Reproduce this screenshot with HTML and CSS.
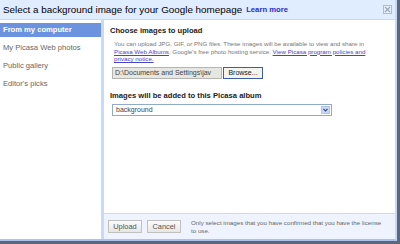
FILE: index.html
```html
<!DOCTYPE html>
<html lang="en">
<head>
    <meta charset="UTF-8">
    <title>Select a background image</title>
    <link rel="stylesheet" href="styles.css">
</head>
<body>
    <div class="dialog">
        <div class="header">
            <span class="title">Select a background image for your Google homepage</span>
            <a class="learn" href="#">Learn more</a>
            <span class="close">
                <svg width="7" height="7" viewBox="0 0 7 7"><path d="M1 1L6 6M6 1L1 6" stroke="#9aa6ba" stroke-width="1.2"/></svg>
            </span>
        </div>
        <div class="body">
            <div class="sidebar">
                <div class="item selected">From my computer</div>
                <div class="item">My Picasa Web photos</div>
                <div class="item">Public gallery</div>
                <div class="item">Editor's picks</div>
            </div>
            <div class="main">
                <div class="content">
                    <div class="heading">Choose images to upload</div>
                    <div class="desc">
                        You can upload JPG, GIF, or PNG files. These images will be available to view and share in<br>
                        <a href="#">Picasa Web Albums</a>, Google's free photo hosting service. <a href="#">View Picasa program policies and</a><br>
                        <a href="#">privacy notice.</a>
                    </div>
                    <div class="file-row">
                        <div class="file-box">D:\Documents and Settings\jav</div>
                        <div class="browse">Browse...</div>
                    </div>
                    <div class="heading album">Images will be added to this Picasa album</div>
                    <div class="select">
                        <span class="select-text">background</span>
                        <span class="select-arrow">
                            <svg width="5" height="4" viewBox="0 0 5 4"><path d="M0.5 1L2.5 3L4.5 1" fill="none" stroke="#3a4a70" stroke-width="1.1"/></svg>
                        </span>
                    </div>
                </div>
                <div class="footer">
                    <div class="btn">Upload</div>
                    <div class="btn">Cancel</div>
                    <div class="note">Only select images that you have confirmed that you have the license<br>to use.</div>
                </div>
            </div>
        </div>
    </div>
</body>
</html>
```

FILE: styles.css
```css
body {
    margin: 0;
    background: #5f6676;
    font-family: "Liberation Sans", Arial, sans-serif;
}
.dialog {
    width: 397px;
    height: 241px;
    box-sizing: border-box;
    background: #fff;
    border-right: 2px solid #c3d9ff;
    border-bottom: 2px solid #a9c3ef;
    display: flex;
    flex-direction: column;
}
.header {
    height: 19px;
    flex: none;
    background: #e0ecff;
    border-bottom: 1px solid #c3d9ff;
    display: flex;
    align-items: center;
    padding-left: 3px;
}
.title {
    font-size: 9.85px;
    color: #000;
}
.learn {
    font-size: 7.7px;
    font-weight: bold;
    color: #2b2bcc;
    text-decoration: none;
    margin-left: 4px;
}
.close {
    margin-left: auto;
    margin-right: 3px;
    width: 9px;
    height: 9px;
    box-sizing: border-box;
    border: 1px solid #a9bcd9;
    background: #e8f0fd;
    display: flex;
    align-items: center;
    justify-content: center;
}
.body {
    flex: 1;
    display: flex;
}
.sidebar {
    width: 101px;
    padding-top: 3px;
}
.item {
    height: 14px;
    line-height: 14px;
    margin-bottom: 4px;
    padding-left: 3px;
    font-size: 7.6px;
    color: #666;
}
.item.selected {
    background: #6b93e0;
    color: #fff;
    font-weight: bold;
}
.main {
    flex: 1;
    display: flex;
    flex-direction: column;
    border-left: 3px solid #c6dafd;
}
.content {
    flex: 1;
    padding: 6px 6px 0 6px;
}
.heading {
    font-size: 7.6px;
    font-weight: bold;
    color: #222;
    line-height: 10px;
}
.desc {
    margin-top: 4px;
    padding-left: 4px;
    font-size: 6.2px;
    line-height: 7.5px;
    color: #777;
}
.desc a {
    color: #4444cc;
}
.file-row {
    display: flex;
    margin-top: 4px;
    margin-left: 2px;
    height: 12px;
}
.file-box {
    width: 110px;
    box-sizing: border-box;
    background: #e6e6e2;
    border: 1px solid #b4b4b0;
    font-size: 7px;
    line-height: 10px;
    color: #444;
    padding-left: 2px;
    white-space: nowrap;
    overflow: hidden;
}
.browse {
    width: 40px;
    box-sizing: border-box;
    margin-left: 1px;
    border: 1px solid #3c5ea8;
    background: #f3f3ef;
    font-size: 7px;
    line-height: 10px;
    color: #222;
    text-align: center;
}
.album {
    margin-top: 12px;
}
.select {
    margin-top: 3px;
    margin-left: 2px;
    width: 220px;
    height: 12px;
    box-sizing: border-box;
    border: 1px solid #8fa9cf;
    display: flex;
    align-items: center;
}
.select-text {
    flex: 1;
    font-size: 7px;
    color: #444;
    padding-left: 3px;
}
.select-arrow {
    width: 9px;
    height: 8px;
    margin-right: 1px;
    background: #c9d8f8;
    border: 1px solid #b0c4ec;
    box-sizing: border-box;
    display: flex;
    align-items: center;
    justify-content: center;
}
.footer {
    height: 25px;
    flex: none;
    background: #eef3fd;
    border-top: 1px solid #c9dbfa;
    display: flex;
    align-items: center;
    padding-left: 4px;
}
.btn {
    width: 34px;
    height: 13px;
    box-sizing: border-box;
    margin-right: 5px;
    border: 1px solid #c0c0c0;
    background: linear-gradient(#fbfbfb, #e6e6e6);
    font-size: 7.4px;
    line-height: 11px;
    color: #555;
    text-align: center;
}
.note {
    margin-left: 5px;
    font-size: 6.2px;
    line-height: 8px;
    color: #666;
}
```
